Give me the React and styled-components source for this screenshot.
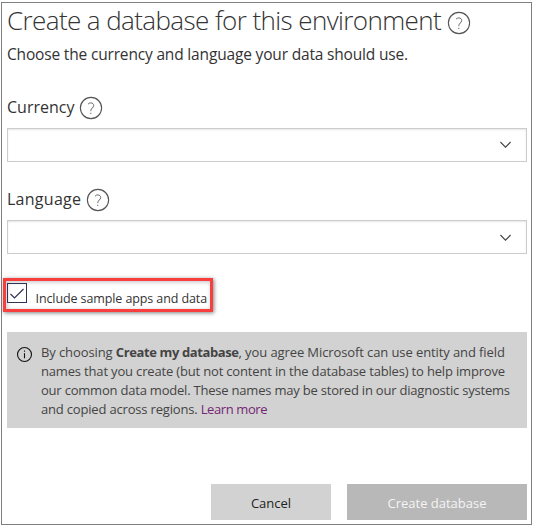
import React from "react";
import styled, { createGlobalStyle } from "styled-components";

const GlobalStyle = createGlobalStyle`
  * { box-sizing: border-box; }
  body {
    margin: 0;
    background: #fff;
    color: #333;
    font-family: "Open Sans", "Noto Sans", sans-serif;
  }
`;

const Dialog = styled.main`
  display: flex;
  flex-direction: column;
  width: 531px;
  height: 523px;
  margin: 2px 0 0 1px;
  padding: 0 4px 4px 5px;
  border: 1px solid #7f7f7f;
  background: #fff;
`;

const TitleRow = styled.header`
  display: flex;
  height: 34px;
`;

const Title = styled.h1`
  margin: 0;
  font-size: 26px;
  font-weight: 300;
  line-height: 35px;
  letter-spacing: -0.6px;
  white-space: nowrap;
`;

const Subtitle = styled.p`
  margin: 0 0 23px;
  font-size: 15.5px;
  line-height: 34px;
  letter-spacing: -0.17px;
  white-space: nowrap;
`;

const Field = styled.section`
  height: 92px;
`;

const LabelRow = styled.div`
  display: flex;
  height: 34px;
`;

const Label = styled.label`
  font-size: 16px;
  line-height: 27px;
  letter-spacing: ${(p) => p.$spacing}px;
`;

const HelpSvg = styled.svg`
  flex: none;
  width: 24px;
  height: 24px;
  margin: ${(p) => p.$top}px 0 0 ${(p) => p.$left}px;
`;

const Select = styled.div`
  display: flex;
  align-items: center;
  justify-content: flex-end;
  width: 520px;
  height: 34px;
  padding: ${(p) => p.$drop}px 15px 0 0;
  border: 1px solid #ccc;
  box-shadow: inset 0 1px 2px rgba(0, 0, 0, 0.1);
`;

const Highlight = styled.label`
  display: flex;
  width: 210px;
  height: 34px;
  margin: 0 0 20px -4px;
  padding: 2px 0 0 1px;
  border: 3px solid #f93e3e;
  box-shadow: 1px 1px 4px rgba(0, 0, 0, 0.5), inset 1px 1px 4px rgba(0, 0, 0, 0.25);
`;

const CheckSvg = styled.svg`
  flex: none;
  width: 20px;
  height: 20px;
`;

const CheckText = styled.span`
  margin: 6px 0 0 8.5px;
  font-size: 12.5px;
  line-height: 20px;
  letter-spacing: -0.1px;
  white-space: nowrap;
`;

const Notice = styled.section`
  display: flex;
  width: 520px;
  height: 96px;
  padding: 10px 0 0 9px;
  background: #d2d2d2;
`;

const InfoSvg = styled.svg`
  flex: none;
  width: 17px;
  height: 17px;
  margin-top: 4px;
`;

const NoticeText = styled.div`
  margin: 1px 0 0 8px;
  color: #444;
  font-size: 13px;
  line-height: 19px;
`;

const Line = styled.div`
  letter-spacing: ${(p) => p.$spacing}px;
  white-space: nowrap;
`;

const Strong = styled.b`
  letter-spacing: -0.39px;
`;

const LearnMore = styled.a`
  color: #742774;
  letter-spacing: -0.4px;
`;

const Actions = styled.footer`
  display: flex;
  justify-content: flex-end;
  gap: 16px;
  margin-top: auto;
`;

const Button = styled.button`
  width: ${(p) => p.$width}px;
  height: 36px;
  padding: 2px 0 0;
  border: 0;
  background: ${(p) => (p.disabled ? "#b8b8b8" : "#d2d2d2")};
  color: ${(p) => (p.disabled ? "#f4f4f4" : "#222")};
  font-family: inherit;
  font-size: 13px;
`;

const Help = ({ left, top }) => (
  <HelpSvg $left={left} $top={top} viewBox="0 0 24 24" fill="none">
    <circle cx="12" cy="12" r="10.6" stroke="#555" strokeWidth="1.1" />
    <path
      d="M9.1 8.1C9.8 7.3 10.7 6.9 11.7 6.9C13.5 6.9 14.7 7.9 14.7 9.5C14.7 11.8 11.8 12.2 11.8 14.7V15.2M11.8 16.8V18"
      stroke="#666"
      strokeWidth="1"
    />
  </HelpSvg>
);

const Chevron = () => (
  <svg width="11" height="8" viewBox="0 0 11 8" fill="none">
    <path d="M0.4 1L5.5 6.1L10.6 1" stroke="#444" strokeWidth="1.1" />
  </svg>
);

export default function App() {
  return (
    <>
      <GlobalStyle />
      <Dialog>
        <TitleRow>
          <Title>Create a database for this environment</Title>
          <Help left={6} top={8.4} />
        </TitleRow>
        <Subtitle>Choose the currency and language your data should use.</Subtitle>
        <Field>
          <LabelRow>
            <Label $spacing={0}>Currency</Label>
            <Help left={5} top={2.2} />
          </LabelRow>
          <Select $drop={0}><Chevron /></Select>
        </Field>
        <Field>
          <LabelRow>
            <Label $spacing={0.27}>Language</Label>
            <Help left={4.5} top={2.2} />
          </LabelRow>
          <Select $drop={1}><Chevron /></Select>
        </Field>
        <Highlight>
          <CheckSvg viewBox="0 0 20 20" fill="none">
            <rect x="0.5" y="0.5" width="19" height="19" stroke="#333355" />
            <path d="M3.5 11L7.5 15L16.5 6" stroke="#333355" strokeWidth="1.2" />
          </CheckSvg>
          <CheckText>Include sample apps and data</CheckText>
        </Highlight>
        <Notice>
          <InfoSvg viewBox="0 0 17 17" fill="none">
            <circle cx="8.5" cy="8.5" r="7" stroke="#111" strokeWidth="1.1" />
            <path d="M8.5 4.6V5.8M8.5 7.2V12.3" stroke="#111" strokeWidth="1.1" />
          </InfoSvg>
          <NoticeText>
            <Line $spacing={-0.1}>By choosing <Strong>Create my database</Strong>, you agree Microsoft can use entity and field</Line>
            <Line $spacing={-0.17}>names that you create (but not content in the database tables) to help improve</Line>
            <Line $spacing={-0.21}>our common data model. These names may be stored in our diagnostic systems</Line>
            <Line $spacing={-0.18}>and copied across regions. <LearnMore>Learn more</LearnMore></Line>
          </NoticeText>
        </Notice>
        <Actions>
          <Button $width={120}>Cancel</Button>
          <Button $width={180} disabled>Create database</Button>
        </Actions>
      </Dialog>
    </>
  );
}
